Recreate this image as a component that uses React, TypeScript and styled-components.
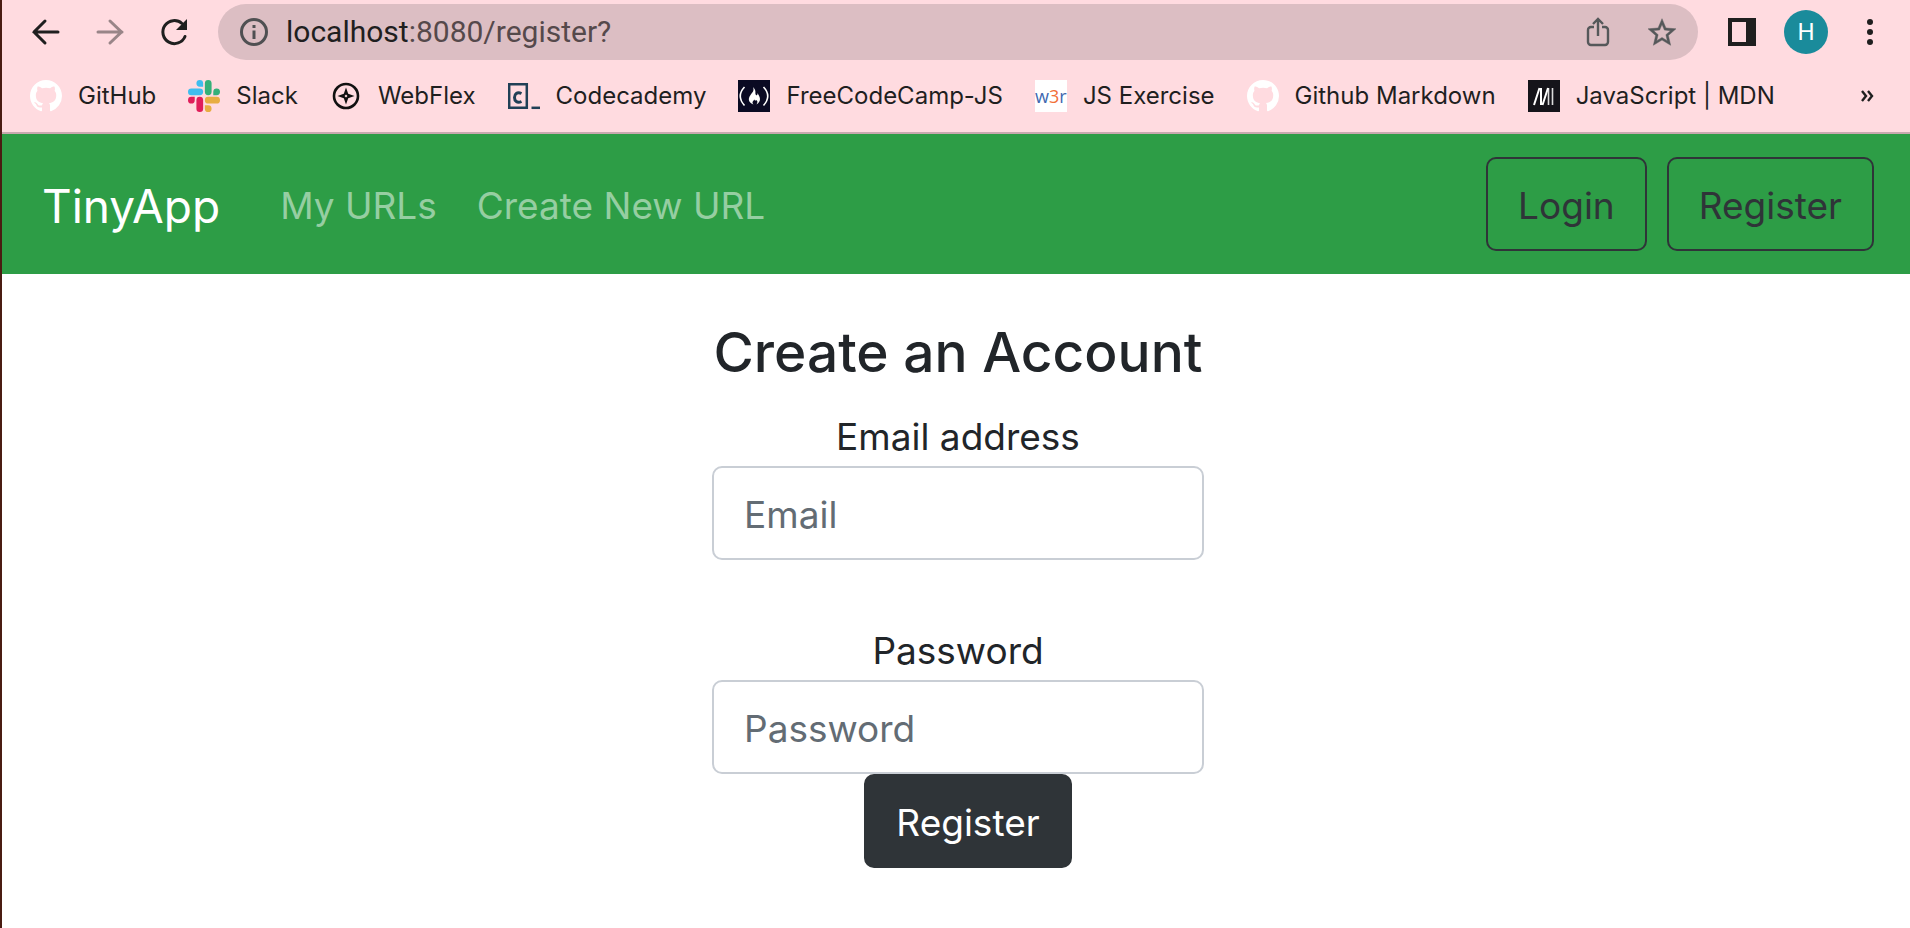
import React from "react";
import styled, { createGlobalStyle } from "styled-components";

const Global = createGlobalStyle`
  *, *::before, *::after { box-sizing: border-box; }
  body { margin: 0; background: #fff; color: #212529; font-family: Inter, sans-serif; }
  button, input { font: inherit; margin: 0; }
  a { color: inherit; text-decoration: none; }
  svg { display: block; }
`;

const Frame = styled.div`
  min-height: 100vh;
  border-left: 2px solid #4a1c12;
`;

const BrowserChrome = styled.header`
  background: #ffdbe0;
  border-bottom: 2px solid #c8a9ae;
`;

const Toolbar = styled.div`
  display: flex;
  align-items: center;
  height: 64px;
  padding: 0 26px 0 28px;
`;

const IconButton = styled.button<{ $gap?: number; $faded?: boolean; $muted?: boolean }>`
  display: flex;
  flex: none;
  padding: 0;
  border: 0;
  background: none;
  color: ${(p) => (p.$muted ? "#55585a" : "#1f1f1f")};
  opacity: ${(p) => (p.$faded ? 0.45 : 1)};
  margin-right: ${(p) => p.$gap ?? 0}px;
`;

const AddressBar = styled.div`
  display: flex;
  flex: 1;
  align-items: center;
  height: 56px;
  margin-right: 30px;
  padding: 0 22px;
  border-radius: 28px;
  background: #dcbec3;
  color: #4f5052;
`;

const Url = styled.div`
  flex: 1;
  margin-left: 18px;
  font-family: Roboto, sans-serif;
  font-size: 30px;
  line-height: 32px;
  color: #55494b;
`;

const Host = styled.span`
  color: #1f1f1f;
`;

const Avatar = styled.button`
  width: 44px;
  height: 44px;
  margin-right: 28px;
  padding: 0;
  border: 0;
  border-radius: 50%;
  background: #1a8b9b;
  color: #fff;
  font-family: Roboto, sans-serif;
  font-size: 24px;
  line-height: 44px;
`;

const Bookmarks = styled.nav`
  display: flex;
  align-items: center;
  height: 68px;
  padding: 0 36px 4px 28px;
  gap: 32px;
`;

const Bookmark = styled.a`
  display: flex;
  align-items: center;
  gap: 16px;
  font-size: 24px;
  line-height: 32px;
  white-space: nowrap;
  color: #1f1f1f;
`;

const More = styled.button`
  margin-left: auto;
  padding: 0;
  border: 0;
  background: none;
  color: #1f1f1f;
`;

const NavBar = styled.nav`
  display: flex;
  align-items: center;
  height: 140px;
  padding: 0 36px 0 40px;
  background: #2d9d46;
`;

const Brand = styled.a`
  margin-right: 60px;
  padding-top: 3px;
  font-size: 46px;
  line-height: 60px;
  color: #fff;
`;

const NavLink = styled.a`
  margin-right: 40px;
  padding-top: 3px;
  font-size: 37px;
  line-height: 60px;
  color: #96cea2;
`;

const Actions = styled.div`
  display: flex;
  gap: 20px;
  margin-left: auto;
`;

const Button = styled.button<{ $filled?: boolean }>`
  height: 94px;
  padding: 3px 30px 0;
  border: 2px solid #2f3438;
  border-radius: 10px;
  background: ${(p) => (p.$filled ? "#2f3438" : "transparent")};
  color: ${(p) => (p.$filled ? "#fff" : "#2f3438")};
  font-size: 37px;
  line-height: 60px;
`;

const Main = styled.main`
  padding: 42px 0 40px 4px;
`;

const Form = styled.form`
  display: flex;
  flex-direction: column;
  width: 492px;
  margin: 0 auto;
`;

const Title = styled.h1`
  margin: 0 0 18px;
  font-size: 55px;
  font-weight: 500;
  line-height: 72px;
  white-space: nowrap;
  text-align: center;
`;

const Field = styled.div`
  display: flex;
  flex-direction: column;
  & + & { margin-top: 60px; }
`;

const Label = styled.label`
  padding-top: 2px;
  font-size: 37px;
  line-height: 58px;
  text-align: center;
`;

const Input = styled.input`
  width: 100%;
  height: 94px;
  padding: 3px 30px 0;
  border: 2px solid #c9ced5;
  border-radius: 10px;
  background: #fff;
  color: #212529;
  font-size: 37px;
  &::placeholder { color: #636c74; opacity: 1; }
`;

const Submit = styled.div`
  display: flex;
  justify-content: center;
  padding-left: 20px;
`;

const stroke = { fill: "none", stroke: "currentColor", strokeWidth: 3 };

const ArrowIcon = ({ flip }: { flip?: boolean }) => (
  <svg width="32" height="32" viewBox="0 0 32 32" {...stroke} strokeLinecap="round">
    {flip ? <path d="M4 16h24M16 5l11.500 11L16 27" /> : <path d="M28 16H4M15 5L4 16l11 11" />}
  </svg>
);

const ReloadIcon = () => (
  <svg width="32" height="32" viewBox="0 0 32 32" {...stroke}>
    <path d="M27 20.500A11.500 11.500 0 1 1 24 7.500" strokeLinecap="round" />
    <path d="M29 3v11H18z" fill="currentColor" stroke="none" />
  </svg>
);

const InfoIcon = () => (
  <svg width="28" height="28" viewBox="0 0 28 28" {...stroke}>
    <circle cx="14" cy="14" r="12.500" />
    <path d="M14 12.500V21M14 7v3" />
  </svg>
);

const ShareIcon = () => (
  <svg width="24" height="30" viewBox="0 0 24 30" {...stroke} strokeWidth={2.4}>
    <path d="M8 10H5a3 3 0 0 0-3 3v12a3 3 0 0 0 3 3h14a3 3 0 0 0 3-3V13a3 3 0 0 0-3-3h-3M12 19V2.500M7 7l5-5 5 5" />
  </svg>
);

const StarIcon = () => (
  <svg width="28" height="28" viewBox="2 2 20 19" fill="currentColor" stroke="currentColor" strokeWidth="0.300">
    <path d="M22 9.240l-7.190-.62L12 2 9.190 8.630 2 9.240l5.460 4.730L5.820 21 12 17.270 18.180 21l-1.630-7.030L22 9.240zM12 15.400l-3.760 2.270 1-4.280-3.320-2.880 4.380-.38L12 6.100l1.710 4.040 4.380.38-3.320 2.880 1 4.280L12 15.400z" />
  </svg>
);

const PanelIcon = () => (
  <svg width="28" height="28" viewBox="0 0 28 28">
    <path fill="currentColor" fillRule="evenodd" d="M0 0h28v28H0zM4 4v20h14V4z" />
  </svg>
);

const DotsIcon = () => (
  <svg width="28" height="28" viewBox="0 0 28 28" fill="currentColor">
    <circle cx="14" cy="4" r="3" />
    <circle cx="14" cy="14" r="3" />
    <circle cx="14" cy="24" r="3" />
  </svg>
);

const GithubIcon = () => (
  <svg width="32" height="32" viewBox="0 0 16 16" fill="#fff">
    <path d="M8 0C3.580 0 0 3.580 0 8c0 3.540 2.290 6.530 5.470 7.590.4.070.55-.17.55-.38 0-.19-.01-.82-.01-1.490-2.010.37-2.530-.49-2.690-.94-.09-.23-.48-.94-.82-1.130-.28-.15-.68-.52-.01-.53.63-.01 1.080.58 1.230.82.72 1.210 1.870.87 2.330.66.07-.52.28-.87.51-1.070-1.780-.2-3.640-.89-3.640-3.950 0-.87.31-1.590.82-2.150-.08-.2-.36-1.020.08-2.120 0 0 .67-.21 2.200.82.64-.18 1.320-.27 2-.27s1.360.09 2 .27c1.530-1.040 2.200-.82 2.200-.82.44 1.100.16 1.920.08 2.120.51.56.82 1.270.82 2.150 0 3.070-1.870 3.750-3.650 3.950.29.25.54.73.54 1.480 0 1.070-.01 1.930-.01 2.200 0 .21.15.46.55.38A8 8 0 0 0 16 8c0-4.420-3.580-8-8-8z" />
  </svg>
);

const SlackIcon = () => (
  <svg width="32" height="32" viewBox="0 0 122.800 122.800">
    <path fill="#e01e5a" d="M25.800 77.600a12.900 12.900 0 1 1-12.900-12.900h12.900zm6.500 0a12.900 12.900 0 1 1 25.800 0v32.300a12.900 12.900 0 1 1-25.800 0z" />
    <path fill="#3fbdee" d="M45.200 25.800a12.900 12.900 0 1 1 12.900-12.900v12.900zm0 6.500a12.900 12.900 0 1 1 0 25.800H12.900a12.900 12.900 0 1 1 0-25.800z" />
    <path fill="#35b079" d="M97 45.200a12.900 12.900 0 1 1 12.900 12.900H97zm-6.500 0a12.900 12.900 0 1 1-25.800 0V12.900a12.900 12.900 0 1 1 25.800 0z" />
    <path fill="#e8ad41" d="M77.600 97a12.900 12.900 0 1 1-12.900 12.900V97zm0-6.500a12.900 12.900 0 1 1 0-25.800h32.300a12.900 12.900 0 1 1 0 25.800z" />
  </svg>
);

const CompassIcon = () => (
  <svg width="32" height="32" viewBox="0 0 32 32">
    <circle cx="16" cy="16" r="12" fill="none" stroke="#111" strokeWidth="2.600" />
    <path fill="#111" fillRule="evenodd" d="M16 7.500l2.200 6.300 6.300 2.200-6.300 2.200L16 24.500l-2.200-6.300L7.500 16l6.300-2.200zM16 14.500L14.500 16l1.500 1.500 1.500-1.500z" />
  </svg>
);

const CodecademyIcon = () => (
  <svg width="32" height="32" viewBox="0 0 32 32" fill="none" stroke="#204056">
    <path strokeWidth="2.500" d="M1.200 4.200h17.600v23.600H1.200z" />
    <path strokeWidth="3" d="M13.500 13.500C9 11.500 6.500 14 6.500 17.500s2.500 6 7 4" />
    <path strokeWidth="2.500" d="M23.500 27.800H32" />
  </svg>
);

const FreeCodeCampIcon = () => (
  <svg width="32" height="32" viewBox="0 0 32 32">
    <path fill="#0a0a23" d="M0 0h32v32H0z" />
    <path fill="none" stroke="#fff" strokeWidth="1.600" d="M6.500 7Q-2 16 6.500 25.500M25.500 7Q34 16 25.500 25.500" />
    <path fill="#fff" d="M15 7c4 4 1.500 6 3 8 1.300 1 1.700-.5 1.300-2 3 4 4.500 8-.8 11.500 1.500-3 1-3.500-.5-4.500-.7 1-1 1-1.500-.5-1.500 1.500-3 3-1 5-5-2-6-5.500-3-9.500 2-3 4-4 2.500-8z" />
  </svg>
);

const W3rIcon = styled.span`
  width: 32px;
  height: 32px;
  background: #fff;
  color: #4068b0;
  font-family: "Open Sans", sans-serif;
  font-size: 18px;
  line-height: 32px;
  text-align: center;
`;

const Accent = styled.span`
  color: #f2703a;
`;

const MdnIcon = () => (
  <svg width="32" height="32" viewBox="0 0 32 32">
    <path fill="#15141a" d="M0 0h32v32H0z" />
    <path fill="none" stroke="#fff" strokeWidth="2" d="M6 25l5.500-17M13 8v17M14.500 25L20 8" />
    <path fill="none" stroke="#fff" strokeWidth="1.600" d="M20.500 8v17M24.500 8v17" strokeOpacity="0.850" />
  </svg>
);

const ChevronsIcon = () => (
  <svg width="14" height="14" viewBox="0 0 14 14" {...stroke} strokeWidth={2.4}>
    <path d="M2 2l4 5-4 5M8 2l4 5-4 5" />
  </svg>
);

const bookmarks: { label: string; icon: React.ReactNode }[] = [
  { label: "GitHub", icon: <GithubIcon /> },
  { label: "Slack", icon: <SlackIcon /> },
  { label: "WebFlex", icon: <CompassIcon /> },
  { label: "Codecademy", icon: <CodecademyIcon /> },
  { label: "FreeCodeCamp-JS", icon: <FreeCodeCampIcon /> },
  { label: "JS Exercise", icon: <W3rIcon>w<Accent>3</Accent>r</W3rIcon> },
  { label: "Github Markdown", icon: <GithubIcon /> },
  { label: "JavaScript | MDN", icon: <MdnIcon /> },
];

export default function App() {
  return (
    <Frame>
      <Global />
      <BrowserChrome>
        <Toolbar>
          <IconButton $gap={32} aria-label="Back"><ArrowIcon /></IconButton>
          <IconButton $gap={32} $faded aria-label="Forward"><ArrowIcon flip /></IconButton>
          <IconButton $gap={28} aria-label="Reload"><ReloadIcon /></IconButton>
          <AddressBar>
            <InfoIcon />
            <Url><Host>localhost</Host>:8080/register?</Url>
            <IconButton $gap={38} $muted aria-label="Share"><ShareIcon /></IconButton>
            <IconButton $muted aria-label="Bookmark this page"><StarIcon /></IconButton>
          </AddressBar>
          <IconButton $gap={28} aria-label="Side panel"><PanelIcon /></IconButton>
          <Avatar aria-label="Profile">H</Avatar>
          <IconButton aria-label="Menu"><DotsIcon /></IconButton>
        </Toolbar>
        <Bookmarks aria-label="Bookmarks">
          {bookmarks.map((b) => (
            <Bookmark key={b.label} href="#">{b.icon}{b.label}</Bookmark>
          ))}
          <More aria-label="More bookmarks"><ChevronsIcon /></More>
        </Bookmarks>
      </BrowserChrome>
      <NavBar>
        <Brand href="#">TinyApp</Brand>
        <NavLink href="#">My URLs</NavLink>
        <NavLink href="#">Create New URL</NavLink>
        <Actions>
          <Button type="button">Login</Button>
          <Button type="button">Register</Button>
        </Actions>
      </NavBar>
      <Main>
        <Form>
          <Title>Create an Account</Title>
          <Field>
            <Label htmlFor="email">Email address</Label>
            <Input id="email" type="email" placeholder="Email" />
          </Field>
          <Field>
            <Label htmlFor="password">Password</Label>
            <Input id="password" type="password" placeholder="Password" />
          </Field>
          <Submit>
            <Button type="submit" $filled>Register</Button>
          </Submit>
        </Form>
      </Main>
    </Frame>
  );
}
